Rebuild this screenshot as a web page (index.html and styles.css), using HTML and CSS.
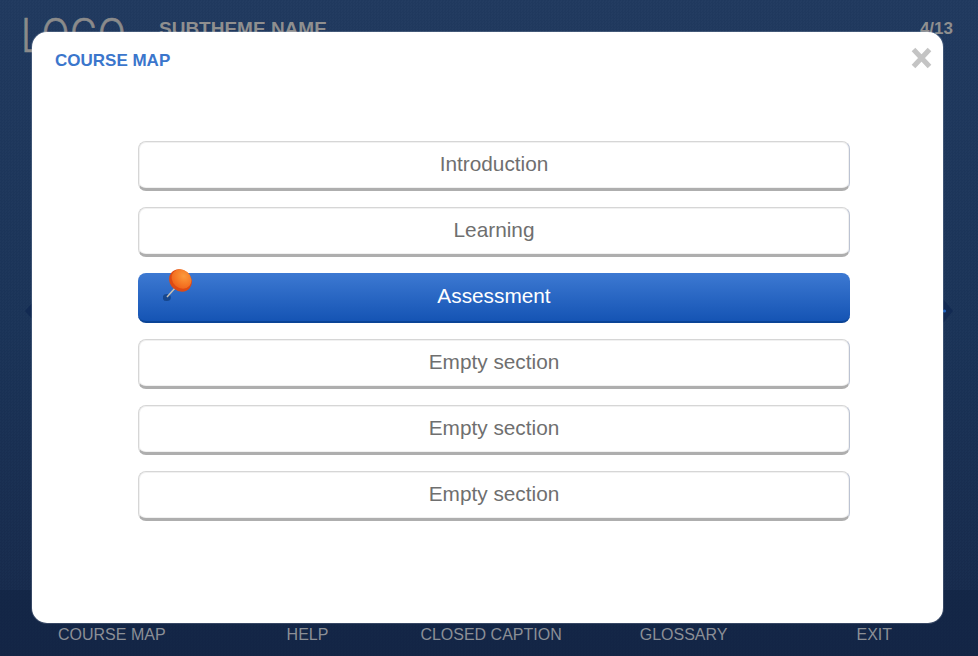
FILE: index.html
```html
<!DOCTYPE html>
<html lang="en">
<head>
<meta charset="utf-8">
<title>Course Map</title>
<link rel="stylesheet" href="styles.css">
</head>
<body>
<div class="page">
  <header class="topbar">
    <span class="logo"><span class="logo-text">LOGO</span></span>
    <span class="subtheme">SUBTHEME NAME</span>
    <span class="pager">4/13</span>
  </header>
  <main class="stage">
    <svg class="arrow" width="12" height="24" viewBox="0 0 12 24"><path d="M12 0 L1 12 L12 24 Z" fill="#122a52"/></svg>
    <svg class="arrow" width="12" height="26" viewBox="0 0 12 26"><path d="M0 0 L11 13 L0 26 Z" fill="#122a52"/><circle cx="2.5" cy="13" r="1.6" fill="#1f66c4"/></svg>
  </main>
  <footer class="footer">
    <span class="f1">COURSE MAP</span>
    <span class="f2">HELP</span>
    <span class="f3">CLOSED CAPTION</span>
    <span class="f4">GLOSSARY</span>
    <span class="f5">EXIT</span>
  </footer>
</div>
<section class="modal">
  <div class="modal-head">
    <h1 class="modal-title">COURSE MAP</h1>
    <svg class="close" width="22" height="22" viewBox="0 0 22 22"><path d="M2.5 2.5 L18.5 19.5 M18.5 2.5 L2.5 19.5" stroke="#c4c4c4" stroke-width="5" fill="none"/></svg>
  </div>
  <nav class="menu">
    <a class="item">Introduction</a>
    <a class="item">Learning</a>
    <a class="item active">
      <svg class="pin" width="34" height="38" viewBox="0 0 34 38">
        <defs>
          <radialGradient id="pg" cx="0.5" cy="0.3" r="0.75">
            <stop offset="0" stop-color="#fb9a3c"/>
            <stop offset="0.55" stop-color="#f67a26"/>
            <stop offset="1" stop-color="#ee5f1a"/>
          </radialGradient>
        </defs>
        <ellipse cx="3.8" cy="29.5" rx="4" ry="3.6" fill="#103a78" opacity="0.7"/>
        <path d="M4 29 L13 19" stroke="#c9c1b4" stroke-width="1.5"/>
        <ellipse cx="17.5" cy="12.5" rx="12" ry="10.5" transform="rotate(40 17.5 12.5)" fill="#dd4a14"/>
        <ellipse cx="18.5" cy="11" rx="10.5" ry="9" transform="rotate(40 18.5 11)" fill="url(#pg)"/>
      </svg>
      Assessment
    </a>
    <a class="item">Empty section</a>
    <a class="item">Empty section</a>
    <a class="item">Empty section</a>
  </nav>
</section>
</body>
</html>
```

FILE: styles.css
```css
* {
  box-sizing: border-box;
}

html,
body {
  margin: 0;
  height: 100%;
  overflow: hidden;
}

body {
  position: relative;
  width: 978px;
  height: 656px;
  font-family: "Liberation Sans", Arial, sans-serif;
}

.page {
  display: flex;
  flex-direction: column;
  height: 656px;
  background-image:
    repeating-conic-gradient(rgba(0, 0, 0, 0.018) 0 25%, rgba(255, 255, 255, 0.006) 0 50%),
    linear-gradient(#213a60, #1b3459 50%, #16294b);
  background-size: 3px 3px, 100% 100%;
}

.topbar {
  display: flex;
  align-items: flex-start;
  height: 60px;
  padding: 10px 25px 0 21px;
}

.logo {
  width: 138px;
  font-family: Roboto, sans-serif;
  font-size: 48px;
  line-height: 52px;
  font-weight: 300;
  color: #8b8b8b;
}

.logo-text {
  display: inline-block;
  transform: scaleX(0.86);
  transform-origin: left center;
  -webkit-text-stroke: 0.7px #8b8b8b;
}

.subtheme {
  margin-top: 9px;
  font-size: 19px;
  line-height: 20px;
  font-weight: 700;
  color: #8f8f8f;
}

.pager {
  margin-top: 10px;
  margin-left: auto;
  font-size: 17px;
  line-height: 18px;
  font-weight: 700;
  color: #8f8f8f;
}

.stage {
  flex: 1;
  display: flex;
  align-items: center;
  justify-content: space-between;
  padding: 0 24px 28px;
}

.footer {
  display: flex;
  height: 66px;
  padding-top: 36px;
  background: rgba(16, 34, 64, 0.45);
  font-size: 16px;
  line-height: 18px;
  color: #8b8f96;
}

.f1 {
  margin-left: 58px;
}

.f2 {
  margin-left: 121px;
}

.f3 {
  margin-left: 92px;
}

.f4 {
  margin-left: 78px;
}

.f5 {
  margin-left: 129px;
}

.modal {
  position: absolute;
  left: 32px;
  top: 32px;
  width: 911px;
  height: 591px;
  background: #fff;
  border-radius: 15px;
  box-shadow: 0 0 0 1px rgba(200, 210, 225, 0.2);
}

.modal-head {
  display: flex;
  justify-content: space-between;
  height: 109px;
  padding: 19px 10px 0 23px;
}

.modal-title {
  margin: 0;
  font-size: 17px;
  line-height: 20px;
  font-weight: 700;
  color: #3b76cc;
}

.close {
  margin-top: -4px;
}

.menu {
  display: flex;
  flex-direction: column;
  gap: 16px;
  padding: 0 93px 0 106px;
}

.item {
  position: relative;
  display: flex;
  align-items: center;
  justify-content: center;
  height: 50px;
  padding-bottom: 3px;
  border: 1px solid #d6d6d6;
  border-right-color: #bcc3d2;
  border-bottom: 3px solid #aeaeae;
  border-radius: 8px;
  background: #fff;
  box-shadow: inset 0 0 0 1px #f1f1f1;
  font-size: 20.8px;
  color: #6f6f6f;
}

.active {
  border: 0;
  border-bottom: 2px solid #0b4496;
  background: linear-gradient(#3d79d2, #1554b4);
  box-shadow: none;
  color: #fff;
  padding-bottom: 2px;
}

.pin {
  position: absolute;
  left: 25px;
  top: -5px;
}
```
